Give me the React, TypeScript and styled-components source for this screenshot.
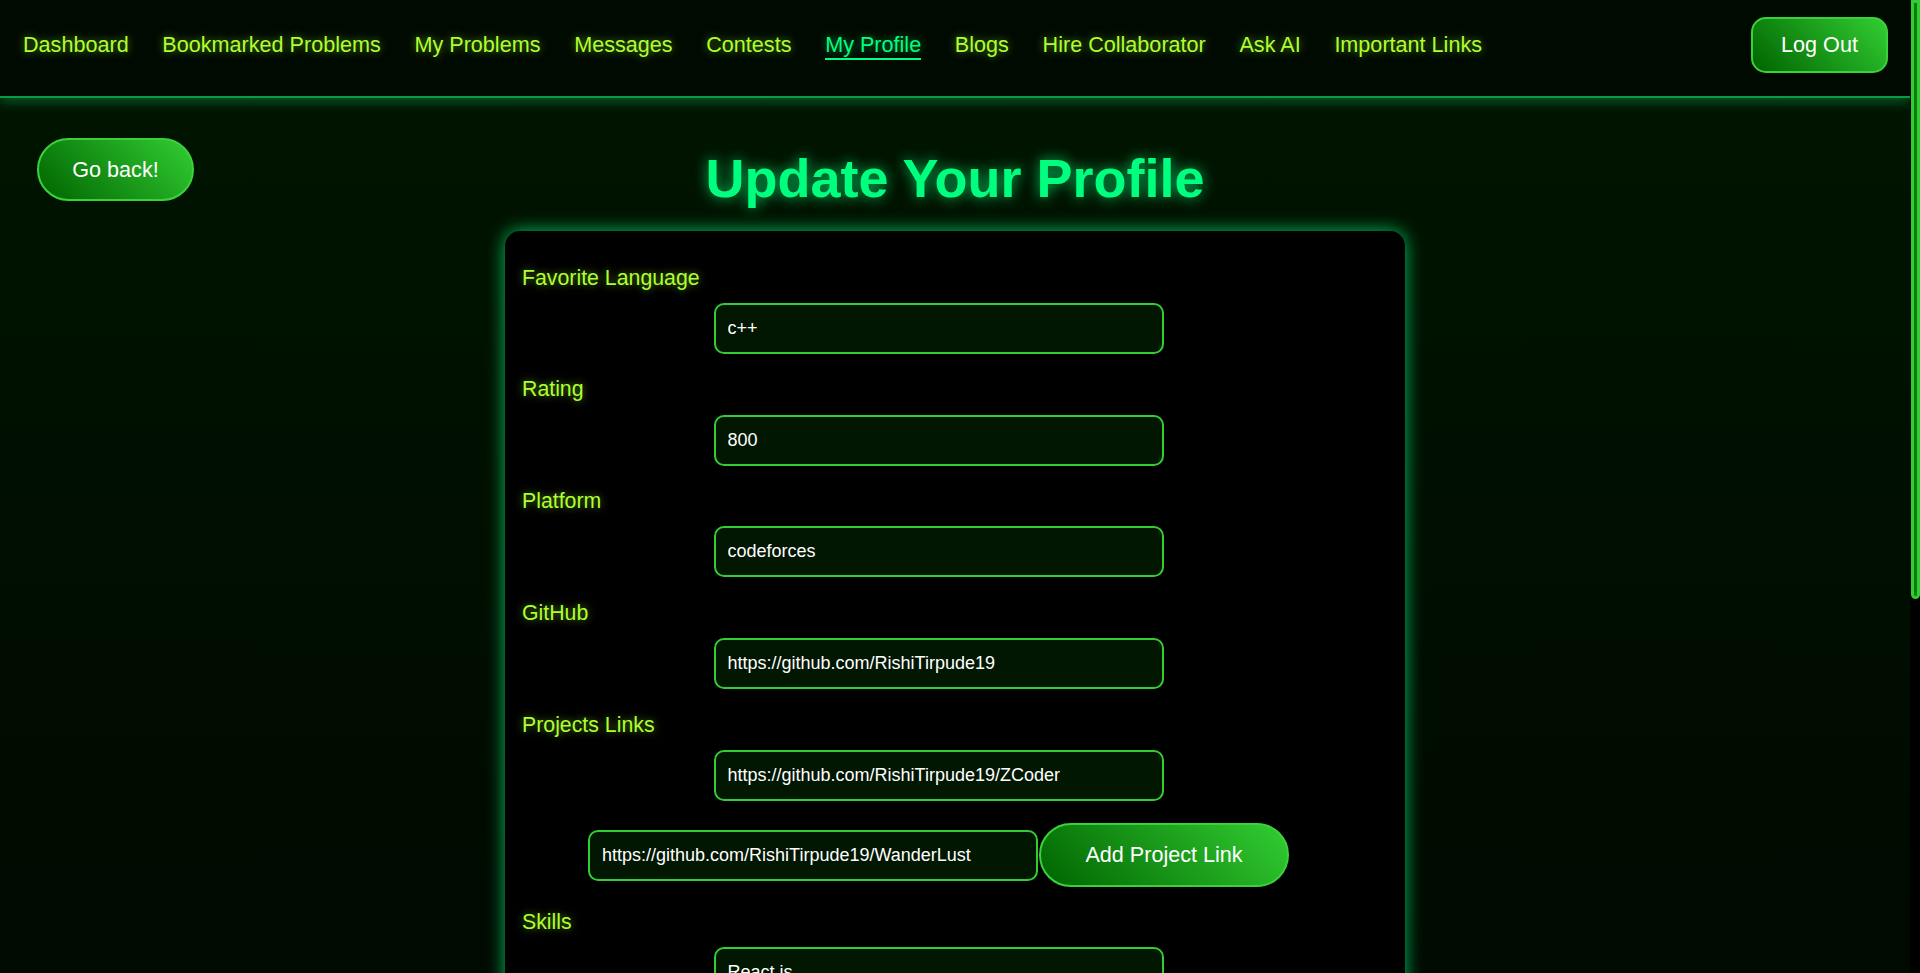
import React from "react";
import styled, { createGlobalStyle } from "styled-components";

const GlobalStyle = createGlobalStyle`
  html, body {
    margin: 0;
    padding: 0;
  }
  body {
    font-family: "Liberation Sans", Arial, sans-serif;
    background: linear-gradient(180deg, #001600 0%, #000b00 45%, #000400 100%);
    color: #ffffff;
    min-height: 100vh;
    padding-right: 10px;
  }
  ::-webkit-scrollbar {
    width: 0;
  }
`;

// page scrollbar, drawn over the right edge as in the reference
const ScrollTrack = styled.div`
  position: fixed;
  top: 0;
  right: 0;
  width: 10px;
  height: 100vh;
  background: #000000;
  display: flex;
  justify-content: flex-end;
`;

const ScrollThumb = styled.div`
  width: 9px;
  height: 599px;
  box-sizing: border-box;
  background: #0a7f0a;
  border: 3px solid #32cd32;
  border-radius: 0 0 6px 6px;
`;

const Nav = styled.nav`
  height: 90px;
  display: flex;
  align-items: center;
  justify-content: space-between;
  padding: 0 22px 6px 23px;
  background: #000a00;
  border-bottom: 2px solid #0b9a48;
  box-shadow: 0 3px 12px rgba(0, 255, 127, 0.35);
`;

const NavLinks = styled.ul`
  display: flex;
  align-items: center;
  gap: 33.7px;
  list-style: none;
  margin: 2px 0 0;
  padding: 0;
`;

const NavLink = styled.li<{ $active?: boolean }>`
  font-size: 21.6px;
  line-height: 26px;
  color: ${(p) => (p.$active ? "#00ff7f" : "#adff2f")};
  text-shadow: 0 0 8px
    ${(p) => (p.$active ? "rgba(0, 255, 127, 0.55)" : "rgba(173, 255, 47, 0.55)")};
  border-bottom: 2px solid ${(p) => (p.$active ? "#00ff7f" : "transparent")};
  cursor: pointer;
`;

const GreenButton = styled.button<{ $pill?: boolean; $w: number; $h: number }>`
  width: ${(p) => p.$w}px;
  height: ${(p) => p.$h}px;
  flex-shrink: 0;
  border: 2px solid #3ad23a;
  border-radius: ${(p) => (p.$pill ? "32px" : "15px")};
  background: linear-gradient(45deg, #006400 0%, #32cd32 100%);
  color: #ffffff;
  font-family: "Liberation Sans", Arial, sans-serif;
  font-size: 21.6px;
  padding: 0;
  cursor: pointer;
`;

const Main = styled.main`
  padding: 40px 37px 40px;
`;

const Header = styled.div`
  display: grid;
  grid-template-columns: 1fr auto 1fr;
  align-items: start;
`;

const Title = styled.h1`
  grid-column: 2;
  margin: 7.5px 0 0;
  font-size: 54px;
  line-height: 1.2;
  font-weight: 700;
  color: #00ff7f;
  text-shadow: 0 0 14px rgba(0, 255, 127, 0.75);
  white-space: nowrap;
`;

const BackCell = styled.div`
  grid-column: 1;
  grid-row: 1;
`;

const Card = styled.form`
  width: 900px;
  box-sizing: border-box;
  margin: 20.5px auto 0;
  padding: 34px 50px 40px 17px;
  background: #000000;
  border-radius: 15px;
  box-shadow: 0 0 18px rgba(0, 255, 127, 0.75);
  display: flex;
  flex-direction: column;
`;

const Label = styled.label`
  display: block;
  font-size: 21.3px;
  line-height: 27.6px;
  color: #adff2f;
  text-shadow: 0 0 8px rgba(173, 255, 47, 0.55);
  margin-bottom: 10.6px;
`;

const Input = styled.input`
  width: 450px;
  height: 51px;
  box-sizing: border-box;
  align-self: center;
  flex-shrink: 0;
  margin-bottom: 22.5px;
  padding: 0 12px;
  border: 2px solid #32cd32;
  border-radius: 10px;
  background: #011701;
  color: #ffffff;
  font-family: "Liberation Sans", Arial, sans-serif;
  font-size: 18px;
  outline: none;
`;

const TextArea = styled.textarea`
  width: 450px;
  height: 160px;
  box-sizing: border-box;
  align-self: center;
  margin-bottom: 22.5px;
  padding: 12px;
  border: 2px solid #32cd32;
  border-radius: 10px;
  background: #011701;
  color: #ffffff;
  font-family: "Liberation Sans", Arial, sans-serif;
  font-size: 18px;
  resize: none;
  outline: none;
`;

const AddRow = styled.div`
  display: flex;
  align-items: center;
  justify-content: center;
  gap: 1px;
  margin-bottom: 21.5px;

  & > input {
    margin-bottom: 0;
  }
`;

const SubmitRow = styled.div`
  display: flex;
  justify-content: center;
  margin-top: 10px;
`;

const links = [
  "Dashboard",
  "Bookmarked Problems",
  "My Problems",
  "Messages",
  "Contests",
  "My Profile",
  "Blogs",
  "Hire Collaborator",
  "Ask AI",
  "Important Links",
];

const fields: { label: string; value: string }[] = [
  { label: "Favorite Language", value: "c++" },
  { label: "Rating", value: "800" },
  { label: "Platform", value: "codeforces" },
  { label: "GitHub", value: "https://github.com/RishiTirpude19" },
];

const App = () => {
  return (
    <>
      <GlobalStyle />
      <Nav>
        <NavLinks>
          {links.map((l) => (
            <NavLink key={l} $active={l === "My Profile"}>
              {l}
            </NavLink>
          ))}
        </NavLinks>
        <GreenButton $w={137} $h={56}>
          Log Out
        </GreenButton>
      </Nav>
      <Main>
        <Header>
          <BackCell>
            <GreenButton type="button" $pill $w={157} $h={63}>
              Go back!
            </GreenButton>
          </BackCell>
          <Title>Update Your Profile</Title>
        </Header>
        <Card onSubmit={(e) => e.preventDefault()}>
          {fields.map((f) => (
            <React.Fragment key={f.label}>
              <Label>{f.label}</Label>
              <Input defaultValue={f.value} />
            </React.Fragment>
          ))}
          <Label>Projects Links</Label>
          <Input defaultValue="https://github.com/RishiTirpude19/ZCoder" />
          <AddRow>
            <Input defaultValue="https://github.com/RishiTirpude19/WanderLust" />
            <GreenButton type="button" $pill $w={250} $h={64}>
              Add Project Link
            </GreenButton>
          </AddRow>
          <Label>Skills</Label>
          <Input defaultValue="React.js" />
          <AddRow>
            <Input defaultValue="Node.js" />
            <GreenButton type="button" $pill $w={250} $h={64}>
              Add Skill
            </GreenButton>
          </AddRow>
          <Label>LinkedIn</Label>
          <Input defaultValue="https://linkedin.com/in/rishitirpude" />
          <Label>LeetCode</Label>
          <Input defaultValue="https://leetcode.com/RishiTirpude19" />
          <Label>Bio</Label>
          <TextArea defaultValue="Competitive programmer and web developer." />
          <Label>Location</Label>
          <Input defaultValue="India" />
          <SubmitRow>
            <GreenButton type="submit" $pill $w={250} $h={64}>
              Update Profile
            </GreenButton>
          </SubmitRow>
        </Card>
      </Main>
      <ScrollTrack>
        <ScrollThumb />
      </ScrollTrack>
    </>
  );
};

export default App;
